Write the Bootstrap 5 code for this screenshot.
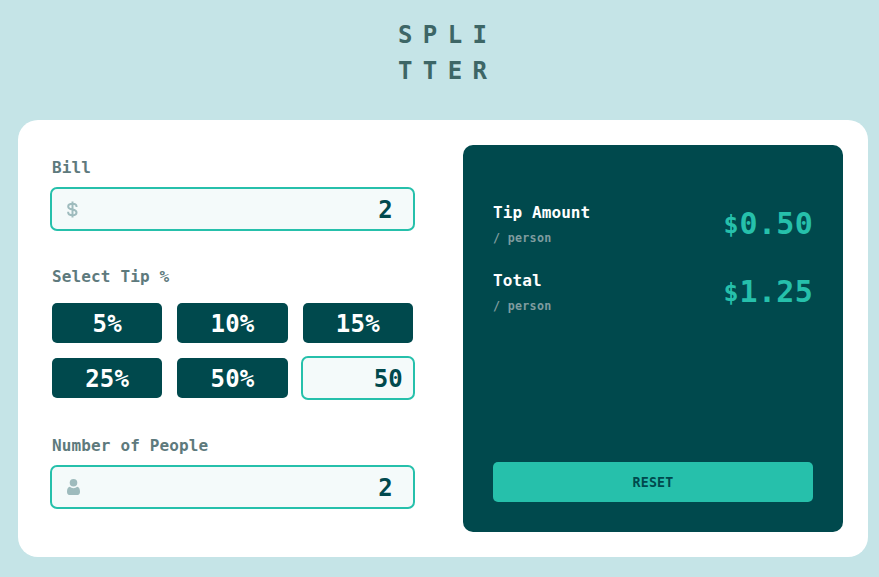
<!DOCTYPE html>
<html lang="en">
<head>
<meta charset="utf-8">
<meta name="viewport" content="width=device-width, initial-scale=1">
<title>Splitter</title>
<link href="https://cdn.jsdelivr.net/npm/bootstrap@5.3.0/dist/css/bootstrap.min.css" rel="stylesheet">
<style>
body{background:#c5e4e7;font-family:"DejaVu Sans Mono",monospace;font-weight:700;letter-spacing:.01em;color:#00494d;height:577px;overflow:hidden}
.logo{width:104px;margin:17px 0 31px 398px;height:72px;font-size:24px;line-height:36px;letter-spacing:10.400px;color:#3d6666}
.calc{width:850px;height:437px;margin-left:18px;padding:25px;border-radius:20px}
.inputs{width:361px;margin:11px 50px 0 9px}
.lbl{display:block;font-size:16px;line-height:24px;color:#5e7a7d;letter-spacing:.14px}
.field{height:40px;background:#f4fafa;border-radius:5px;outline:2px solid #26c0ab}
.lbl + .field{margin-top:9px}
.tip-label{padding-top:12px}
.glyph{margin-left:-1px}
.amount{width:100%;height:40px;padding:2px 20px 0 0;border:0;outline:0;background:none;font:inherit;font-size:24px;letter-spacing:.2px;color:#00494d;text-align:right}
.custom .amount{padding-right:10px}
.tips{display:grid;grid-template-columns:repeat(3,1fr);gap:15px;margin:14px 0 36px}
.tip,.tip:hover{height:40px;padding:2px 0 0;border:0;border-radius:5px;background:#00494d;color:#fff;font-size:24px;line-height:38px;font-weight:700;letter-spacing:.2px}
.panel{width:380px;height:387px;padding:55px 30px 30px;border-radius:10px;background:#00494d}
.result{height:68px}
.title{padding-top:1px;font-size:16px;line-height:24px;color:#fff;letter-spacing:.1px}
.per{font-size:11.700px;line-height:18px;margin-top:4px;color:#7f9c9f;letter-spacing:.28px}
.value{font-size:30px;line-height:48px;color:#26c0ab;letter-spacing:.3px}
.value b{display:inline-block;width:16px;font-size:25px;vertical-align:1px;letter-spacing:0}
.reset,.reset:hover{height:40px;padding:1px 0 0;border:0;border-radius:5px;background:#26c0ab;color:#00494d;font-size:13.333px;font-weight:700;line-height:39px;letter-spacing:.16px}
</style>
<script src="https://cdn.jsdelivr.net/npm/bootstrap@5.3.0/dist/js/bootstrap.bundle.min.js"></script>
</head>
<body>
<header class="logo">SPLI<br>TTER</header>
<main class="calc bg-white d-flex align-items-start">
  <section class="inputs">
    <label class="lbl" for="bill">Bill</label>
    <div class="field d-flex align-items-center mb-4 ps-3">
      <svg class="glyph flex-shrink-0" width="11" height="17" viewBox="0 0 11 17" fill="none" stroke="#9ebbbd" stroke-width="2"><path d="M5.500 .5v16M9.500 6V5.300C9.500 3.500 8 2.800 5.500 2.800S1.200 3.600 1.200 5.500S3 8.100 5.500 8.500S9.500 9.500 9.500 11.500S8 14.300 5.500 14.300S1.200 13.400 1.200 11.600v-.8"/></svg>
      <input id="bill" class="amount" value="2">
    </div>
    <div class="lbl tip-label">Select Tip %</div>
    <div class="tips">
      <button class="btn tip">5%</button>
      <button class="btn tip">10%</button>
      <button class="btn tip">15%</button>
      <button class="btn tip">25%</button>
      <button class="btn tip">50%</button>
      <div class="field custom"><input class="amount" value="50" aria-label="Custom tip"></div>
    </div>
    <label class="lbl" for="people">Number of People</label>
    <div class="field d-flex align-items-center ps-3">
      <svg class="glyph flex-shrink-0" width="13" height="16" viewBox="0 0 13 16" fill="#9ebbbd"><circle cx="6.500" cy="3.800" r="3.800"/><path d="M2.800 7.800C3.800 8.700 5 9.200 6.500 9.200S9.200 8.700 10.200 7.800C12 8 13 9.600 13 12.800C13 14.800 12.200 16 10.600 16H2.400C.8 16 0 14.800 0 12.800C0 9.600 1 8 2.800 7.800Z"/></svg>
      <input id="people" class="amount" value="2">
    </div>
  </section>
  <section class="panel d-flex flex-column">
    <div class="result d-flex justify-content-between">
      <div><div class="title">Tip Amount</div><div class="per">/ person</div></div>
      <div class="value"><b>$</b>0.50</div>
    </div>
    <div class="result d-flex justify-content-between">
      <div><div class="title">Total</div><div class="per">/ person</div></div>
      <div class="value"><b>$</b>1.25</div>
    </div>
    <button class="btn reset w-100 mt-auto">RESET</button>
  </section>
</main>
</body>
</html>
